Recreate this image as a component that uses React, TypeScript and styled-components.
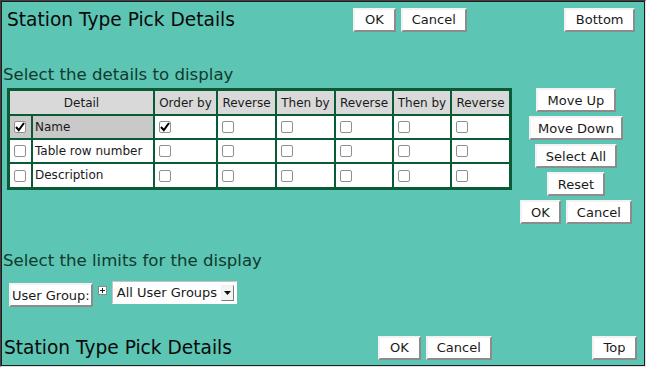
import React from "react";
import styled, { createGlobalStyle } from "styled-components";

const GlobalStyle = createGlobalStyle`
	html, body {
		margin: 0;
		padding: 0;
		background: #ffffff;
	}
	* {
		box-sizing: border-box;
	}
`;

const Frame = styled.div`
	width: 646px;
	height: 367px;
	display: flex;
	flex-direction: column;
	background-color: #5cc5b4;
	border: 1px solid;
	border-color: #404040 #e2e2e2 #e2e2e2 #404040;
	box-shadow: inset 1px 1px 0 #1e1e1e, inset -1px -1px 0 #1e1e1e;
	font-family: "DejaVu Sans", "Liberation Sans", sans-serif;
	color: #111;
`;

const Bar = styled.div<{ $top: number; $left: number; $right: number }>`
	display: flex;
	align-items: center;
	padding: ${(p) => p.$top}px ${(p) => p.$right}px 0 ${(p) => p.$left}px;
`;

const Title = styled.div<{ $width: number }>`
	width: ${(p) => p.$width}px;
	font-size: 18.6px;
	line-height: 24px;
	padding-top: 1px;
	color: #0a0a0a;
	white-space: nowrap;
`;

const Spacer = styled.div`
	flex: 1;
`;

const Button = styled.button<{ $pad?: number }>`
	height: 24px;
	margin: 0;
	padding: 0 ${(p) => (p.$pad ?? 9)}px;
	background: #ffffff;
	border: 2px solid;
	border-color: #f2f2f2 #8c8c8c #8c8c8c #f2f2f2;
	font-family: "DejaVu Sans", "Liberation Sans", sans-serif;
	font-size: 13px;
	color: #1a1a1a;
	white-space: nowrap;
	cursor: pointer;
`;

const ButtonPair = styled.div`
	display: flex;
	gap: 5px;
`;

const Heading = styled.h2<{ $top: number }>`
	margin: ${(p) => p.$top}px 0 0 0;
	padding-left: 2px;
	font-size: 16.6px;
	font-weight: normal;
	line-height: 21px;
	color: #103a2e;
`;

const DetailsArea = styled.div`
	display: flex;
	align-items: flex-start;
	padding-left: 6px;
	margin-top: 3px;
`;

const Grid = styled.table`
	border-collapse: separate;
	border-spacing: 0;
	table-layout: fixed;
	border: 3px solid #0b5a36;
	background: #ffffff;
	font-size: 12px;
`;

const HeadCell = styled.th`
	padding: 0;
	height: 25px;
	line-height: 22px;
	font-weight: normal;
	text-align: center;
	background: #d9d9d9;
	color: #1a1a1a;
	white-space: nowrap;
	border-right: 2px solid #0b5a36;
	border-bottom: 2px solid #0b5a36;
	&:last-child {
		border-right: none;
	}
`;

const Cell = styled.td<{ $selected?: boolean; $last?: boolean; $bottom?: boolean }>`
	padding: 0 0 0 2px;
	height: ${(p) => (p.$bottom ? 23 : 24)}px;
	line-height: 21px;
	background: ${(p) => (p.$selected ? "#c9c9c9" : "#ffffff")};
	color: #1a1a1a;
	white-space: nowrap;
	vertical-align: middle;
	border-right: ${(p) => (p.$last ? "none" : "2px solid #0b5a36")};
	border-bottom: ${(p) => (p.$bottom ? "none" : "2px solid #0b5a36")};
`;

const BoxCell = styled(Cell)`
	padding: 0 0 0 4px;
`;

const Tick = styled.span`
	display: block;
	width: 12px;
	height: 12px;
	border: 1px solid #8f8f8f;
	border-radius: 2px;
	background: #ffffff;
	svg {
		display: block;
	}
`;

const SideButtons = styled.div`
	width: 124px;
	margin-left: 2px;
	display: flex;
	flex-direction: column;
	align-items: center;
	gap: 4px;
`;

const LimitRow = styled.div`
	display: flex;
	align-items: flex-start;
	padding-left: 8px;
	margin-top: 12px;
`;

const PlusIcon = styled.span`
	display: block;
	margin: 3px 5px 0 5px;
	svg {
		display: block;
	}
`;

const Select = styled.div`
	width: 125px;
	height: 23px;
	margin-top: -2px;
	display: flex;
	align-items: center;
	background: #ffffff;
	border: 1px solid;
	border-color: #c4c4c4 #ffffff #ffffff #c4c4c4;
	padding-left: 4px;
	font-size: 13px;
	color: #1a1a1a;
	white-space: nowrap;
`;

const SelectText = styled.span`
	flex: 1;
`;

const Arrow = styled.span`
	width: 13px;
	height: 16px;
	margin-right: 2px;
	display: flex;
	align-items: center;
	justify-content: center;
	border: 1px solid;
	border-color: #f0f0f0 #7a7a7a #7a7a7a #f0f0f0;
	background: #f4f4f4;
`;

const Footer = styled.div`
	margin-top: auto;
	padding-bottom: 6px;
`;

const columns = [
	{ label: "Order by", width: 63 },
	{ label: "Reverse", width: 59 },
	{ label: "Then by", width: 59 },
	{ label: "Reverse", width: 58 },
	{ label: "Then by", width: 58 },
	{ label: "Reverse", width: 57 },
];

const rows = [
	{ name: "Name", checked: true, order: true },
	{ name: "Table row number", checked: false, order: false },
	{ name: "Description", checked: false, order: false },
];

function CheckBox({ checked }: { checked?: boolean }) {
	return (
		<Tick>
			{checked && (
				<svg width="10" height="10" viewBox="0 0 10 10">
					<path d="M1 5 L3.8 8.2 L9 1" fill="none" stroke="#000" strokeWidth="2" />
				</svg>
			)}
		</Tick>
	);
}

function TopBar({ title, last, top, left, right, width }: {
	title: string;
	last: string;
	top: number;
	left: number;
	right: number;
	width: number;
}) {
	return (
		<Bar $top={top} $left={left} $right={right}>
			<Title $width={width}>{title}</Title>
			<ButtonPair>
				<Button $pad={10}>OK</Button>
				<Button $pad={9}>Cancel</Button>
			</ButtonPair>
			<Spacer />
			<Button $pad={9.5}>{last}</Button>
		</Bar>
	);
}

export default function App() {
	return (
		<>
			<GlobalStyle />
			<Frame>
				<TopBar title="Station Type Pick Details" last="Bottom" top={6} left={6} right={10} width={346} />
				<Heading $top={32}>Select the details to display</Heading>
				<DetailsArea>
					<Grid>
						<colgroup>
							<col style={{ width: 23 }} />
							<col style={{ width: 122 }} />
							{columns.map((c, i) => (
								<col key={i} style={{ width: c.width }} />
							))}
						</colgroup>
						<thead>
							<tr>
								<HeadCell colSpan={2}>Detail</HeadCell>
								{columns.map((c, i) => (
									<HeadCell key={i}>{c.label}</HeadCell>
								))}
							</tr>
						</thead>
						<tbody>
							{rows.map((r, ri) => {
								const bottom = ri === rows.length - 1;
								return (
									<tr key={r.name}>
										<BoxCell $selected={r.checked} $bottom={bottom}>
											<CheckBox checked={r.checked} />
										</BoxCell>
										<Cell $selected={r.checked} $bottom={bottom}>
											{r.name}
										</Cell>
										{columns.map((c, ci) => (
											<BoxCell key={ci} $bottom={bottom} $last={ci === columns.length - 1}>
												<CheckBox checked={ci === 0 && r.order} />
											</BoxCell>
										))}
									</tr>
								);
							})}
						</tbody>
					</Grid>
					<SideButtons>
						<Button $pad={10}>Move Up</Button>
						<Button $pad={7.5}>Move Down</Button>
						<Button $pad={9}>Select All</Button>
						<Button $pad={9}>Reset</Button>
						<ButtonPair>
							<Button $pad={9}>OK</Button>
							<Button $pad={9}>Cancel</Button>
						</ButtonPair>
					</SideButtons>
				</DetailsArea>
				<Heading $top={26}>Select the limits for the display</Heading>
				<LimitRow>
					<Button $pad={1}>User Group:</Button>
					<PlusIcon>
						<svg width="9" height="9" viewBox="0 0 9 9">
							<rect x="0.5" y="0.5" width="8" height="8" fill="#fff" stroke="#8a8a8a" />
							<path d="M2 4.5 H7 M4.5 2 V7" stroke="#222" strokeWidth="1" />
						</svg>
					</PlusIcon>
					<Select>
						<SelectText>All User Groups</SelectText>
						<Arrow>
							<svg width="7" height="4" viewBox="0 0 7 4">
								<path d="M0 0 H7 L3.5 4 Z" fill="#111" />
							</svg>
						</Arrow>
					</Select>
				</LimitRow>
				<Footer>
					<TopBar title="Station Type Pick Details" last="Top" top={0} left={3} right={8} width={374} />
				</Footer>
			</Frame>
		</>
	);
}
